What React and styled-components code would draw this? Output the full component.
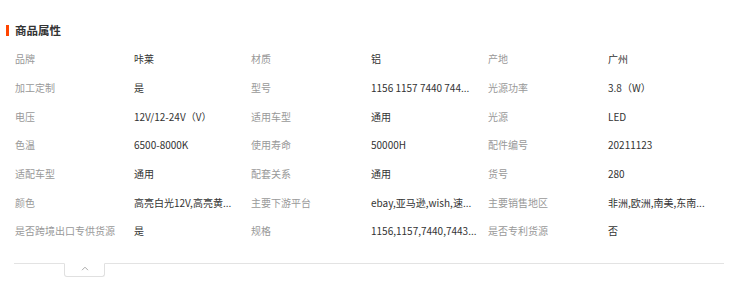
import React from "react";
import styled, { createGlobalStyle } from "styled-components";

const GlobalStyle = createGlobalStyle`
  body {
    margin: 0;
    background: #fff;
    font-family: "Noto Sans CJK SC", "Noto Sans", sans-serif;
  }
`;

// values are shown already shortened, as on the product page
const attrs = [
  ["品牌", "咔莱", "材质", "铝", "产地", "广州"],
  ["加工定制", "是", "型号", "1156 1157 7440 744...", "光源功率", "3.8（W）"],
  ["电压", "12V/12-24V（V）", "适用车型", "通用", "光源", "LED"],
  ["色温", "6500-8000K", "使用寿命", "50000H", "配件编号", "20211123"],
  ["适配车型", "通用", "配套关系", "通用", "货号", "280"],
  ["颜色", "高亮白光12V,高亮黄...", "主要下游平台", "ebay,亚马逊,wish,速...", "主要销售地区", "非洲,欧洲,南美,东南..."],
  ["是否跨境出口专供货源", "是", "规格", "1156,1157,7440,7443...", "是否专利货源", "否"],
];

const App = () => (
  <>
    <GlobalStyle />
    <Panel>
      <Title>商品属性</Title>
      <AttrGrid>
        {attrs.map((row, i) =>
          row.map((text, j) =>
            j % 2 === 0 ? (
              <Label key={`${i}-${j}`}>{text}</Label>
            ) : (
              <Value key={`${i}-${j}`}>{text}</Value>
            )
          )
        )}
      </AttrGrid>
      <Footer>
        <FoldTab>
          <svg width="8" height="5" viewBox="0 0 8 5">
            <path d="M1 4.2 L4 1.2 L7 4.2" fill="none" stroke="#aaa" strokeWidth="1" />
          </svg>
        </FoldTab>
      </Footer>
    </Panel>
  </>
);

export default App;

const Panel = styled.div`
  width: 742px;
  height: 287px;
  box-sizing: border-box;
  padding: 24px 18px 0 6px;
`;

const Title = styled.h3`
  margin: 0;
  display: flex;
  align-items: center;
  gap: 6px;
  height: 12px;
  font-size: 11.5px;
  font-weight: 700;
  color: #333;

  &::before {
    content: "";
    width: 3px;
    height: 11px;
    background: #ff4400;
  }
`;

const AttrGrid = styled.div`
  display: grid;
  grid-template-columns: 119px 117px 120px 117px 120px 1fr;
  grid-auto-rows: 28.7px;
  align-items: center;
  margin: 8.5px 0 0 9px;
  font-size: 10px;
`;

const Label = styled.div`
  color: #999;
  white-space: nowrap;
`;

const Value = styled.div`
  color: #333;
  white-space: nowrap;
`;

const Footer = styled.div`
  margin: 18px 0 0 8px;
  border-top: 1px solid #e3e3e3;
  padding-left: 50px;
`;

const FoldTab = styled.div`
  width: 41px;
  height: 14px;
  margin-top: -1px;
  box-sizing: border-box;
  border: 1px solid #e0e0e0;
  border-top: 1px solid #fff;
  border-radius: 0 0 3px 3px;
  background: #fff;
  display: flex;
  justify-content: center;
  padding-top: 2px;
`;
